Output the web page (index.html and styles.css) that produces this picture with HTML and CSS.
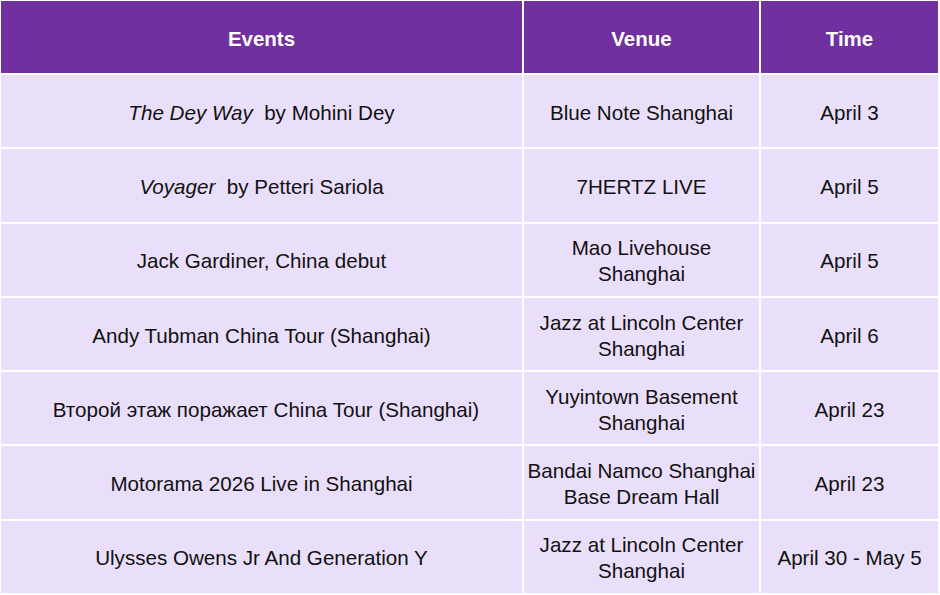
FILE: index.html
```html
<!DOCTYPE html>
<html lang="en">
<head>
<meta charset="utf-8">
<title>Events</title>
<link rel="stylesheet" href="styles.css">
</head>
<body>
<div class="table">
  <div class="cell head">Events</div>
  <div class="cell head">Venue</div>
  <div class="cell head">Time</div>

  <div class="cell"><span><i>The Dey Way</i>&nbsp; by Mohini Dey</span></div>
  <div class="cell">Blue Note Shanghai</div>
  <div class="cell">April 3</div>

  <div class="cell"><span><i>Voyager</i>&nbsp; by Petteri Sariola</span></div>
  <div class="cell">7HERTZ LIVE</div>
  <div class="cell">April 5</div>

  <div class="cell">Jack Gardiner, China debut</div>
  <div class="cell">Mao Livehouse<br>Shanghai</div>
  <div class="cell">April 5</div>

  <div class="cell">Andy Tubman China Tour (Shanghai)</div>
  <div class="cell">Jazz at Lincoln Center<br>Shanghai</div>
  <div class="cell">April 6</div>

  <div class="cell cyr">Второй этаж поражает China Tour (Shanghai)</div>
  <div class="cell">Yuyintown Basement<br>Shanghai</div>
  <div class="cell">April 23</div>

  <div class="cell">Motorama 2026 Live in Shanghai</div>
  <div class="cell">Bandai Namco Shanghai<br>Base Dream Hall</div>
  <div class="cell">April 23</div>

  <div class="cell">Ulysses Owens Jr And Generation Y</div>
  <div class="cell">Jazz at Lincoln Center<br>Shanghai</div>
  <div class="cell">April 30 - May 5</div>
</div>
</body>
</html>
```
FILE: styles.css
```css
html, body {
  margin: 0;
  padding: 0;
  background: #ffffff;
}
body {
  padding: 1px 0 0 1px;
  font-family: "Liberation Sans", Arial, sans-serif;
}
.table {
  display: grid;
  grid-template-columns: 521px 235px 177px;
  grid-template-rows: 72px repeat(7, 72.3px);
  gap: 2px;
  width: 937px;
  background: #ffffff;
}
.cell {
  display: flex;
  align-items: center;
  justify-content: center;
  text-align: center;
  background: #eadffb;
  color: #111111;
  font-size: 20.6px;
  line-height: 26px;
  padding-top: 3px;
  box-sizing: border-box;
}
.cell.cyr {
  padding-left: 9px;
}
.cell.head {
  background: #7030a0;
  color: #ffffff;
  font-weight: bold;
  font-size: 20.5px;
  padding-top: 4px;
}
```
